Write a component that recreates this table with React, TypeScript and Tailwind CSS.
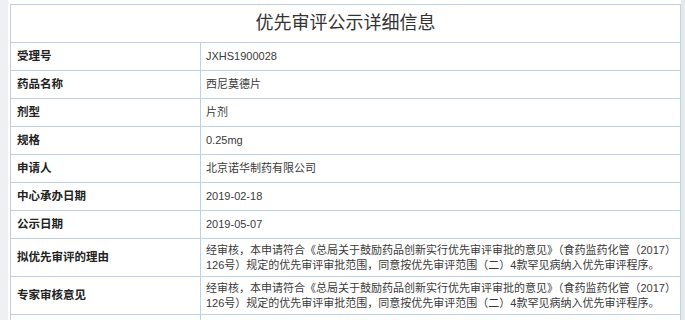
const reason = [
  '经审核，本申请符合《总局关于鼓励药品创新实行优先审评审批的意见》（食药监药化管（2017）',
  '126号）规定的优先审评审批范围，同意按优先审评范围（二）4款罕见病纳入优先审评程序。',
]

const rows: { label: string; value: string[]; tall?: boolean }[] = [
  { label: '受理号', value: ['JXHS1900028'] },
  { label: '药品名称', value: ['西尼莫德片'] },
  { label: '剂型', value: ['片剂'] },
  { label: '规格', value: ['0.25mg'] },
  { label: '申请人', value: ['北京诺华制药有限公司'] },
  { label: '中心承办日期', value: ['2019-02-18'] },
  { label: '公示日期', value: ['2019-05-07'] },
  { label: '拟优先审评的理由', value: reason, tall: true },
  { label: '专家审核意见', value: reason, tall: true },
]

export default function App() {
  return (
    <div
      className="flex h-[320px] w-[685px] overflow-hidden bg-white"
      style={{ fontFamily: '"Liberation Sans", "Noto Sans CJK SC", sans-serif' }}
    >
      {/* left page gutter */}
      <div className="w-[8px] shrink-0 bg-[#eef0f2]" />
      <div className="w-[2px] shrink-0" />

      <div className="w-[671px] shrink-0 pt-[4px]">
        <table className="w-full table-fixed border-collapse">
          <colgroup>
            <col className="w-[190px]" />
            <col />
          </colgroup>
          <tbody>
            <tr className="h-[38px]">
              <td
                colSpan={2}
                className="border border-[#bfd2e4] text-center text-[18px] text-[#333]"
              >
                优先审评公示详细信息
              </td>
            </tr>
            {rows.map((r) => (
              <tr key={r.label} className={r.tall ? 'h-[38px]' : 'h-[28px]'}>
                <td className="border border-[#bfd2e4] pl-[6px] text-[11.5px] font-bold text-[#222]">
                  {r.label}
                </td>
                <td className="border border-[#bfd2e4] pl-[5px] pr-[4px] text-[11px] leading-[15px] whitespace-nowrap text-[#3a3a3a]">
                  {r.value.map((line, i) => (
                    <div key={i}>{line}</div>
                  ))}
                </td>
              </tr>
            ))}
            <tr className="h-[28px]">
              <td className="border border-[#bfd2e4]" />
              <td className="border border-[#bfd2e4]" />
            </tr>
          </tbody>
        </table>
      </div>

      {/* right page gutter */}
      <div className="flex-1 bg-[#e6e9ec]" />
    </div>
  )
}
